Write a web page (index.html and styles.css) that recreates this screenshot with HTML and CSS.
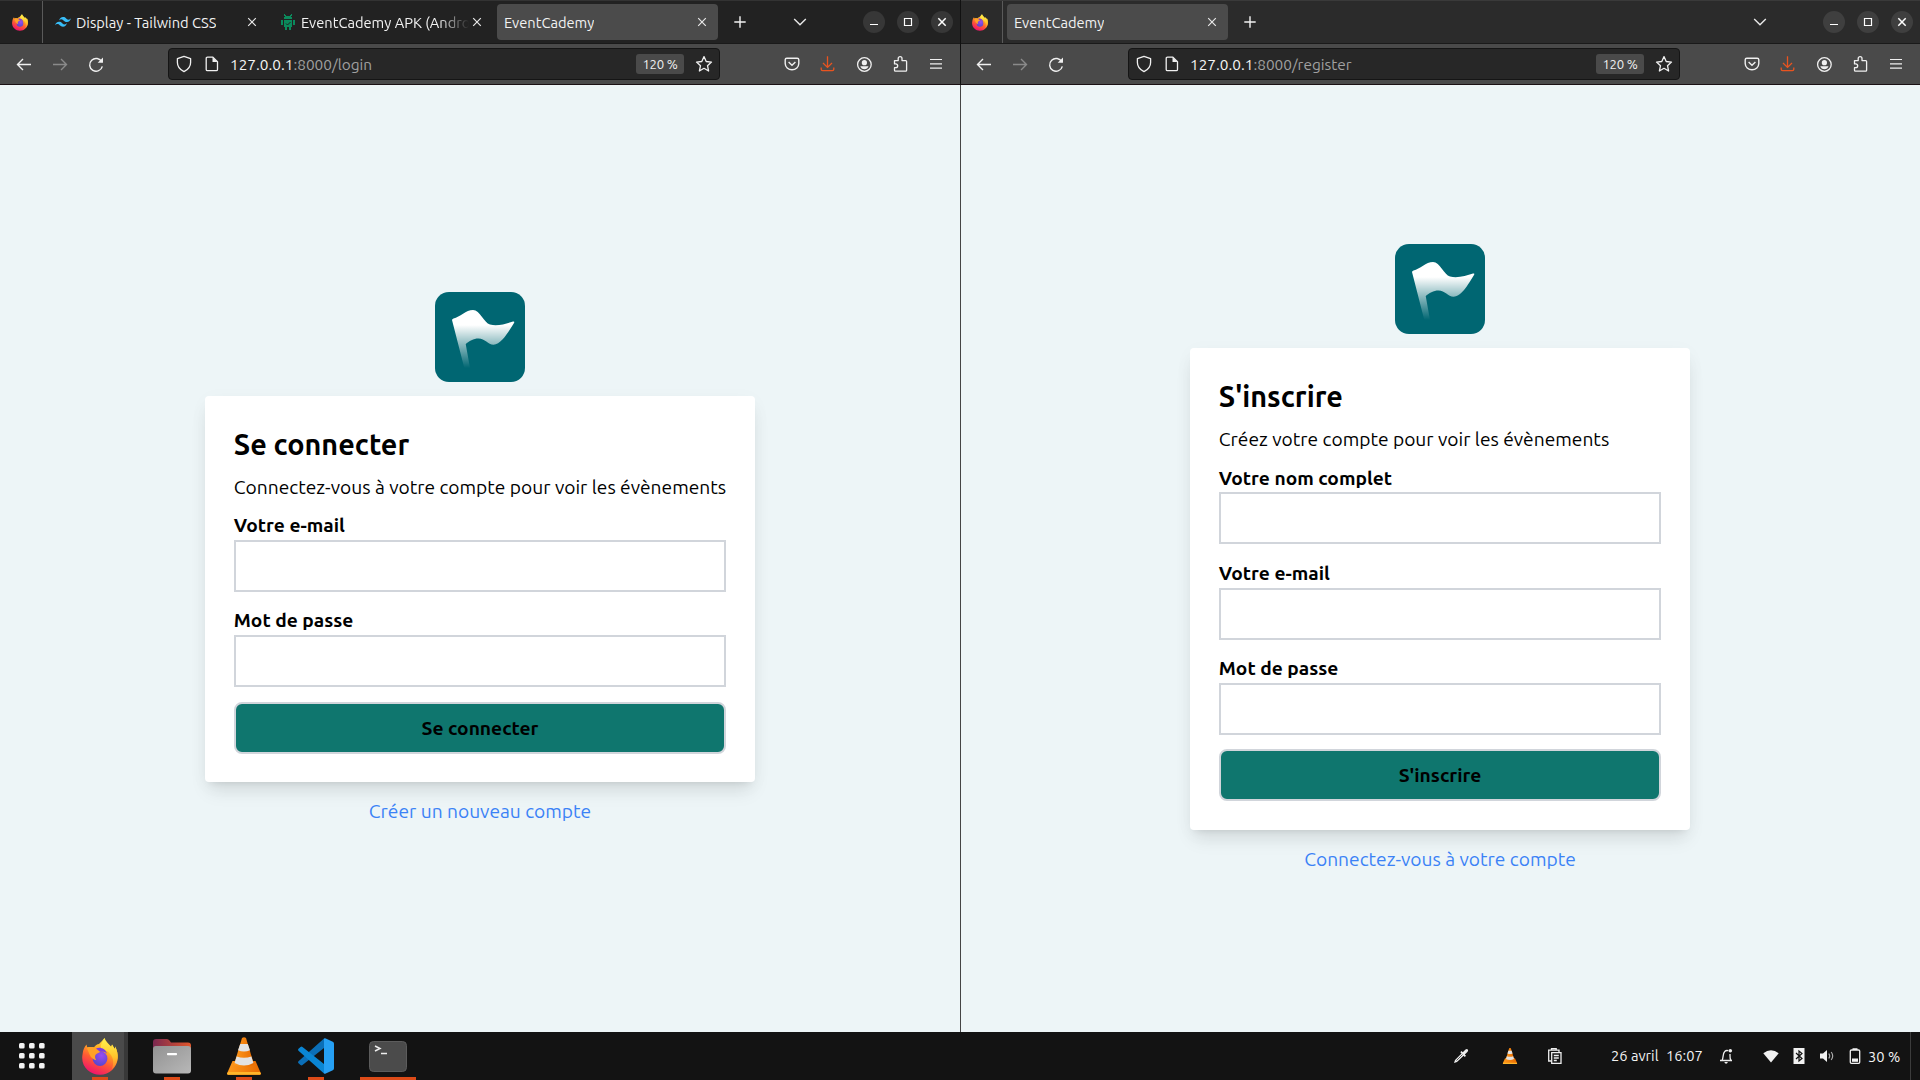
FILE: index.html
```html
<!DOCTYPE html>
<html lang="fr">
<head>
<meta charset="utf-8">
<title>EventCademy</title>
<link rel="stylesheet" href="styles.css">
</head>
<body>
<svg class="defs" width="0" height="0" aria-hidden="true">
  <defs>
    <linearGradient id="ffBody" x1="0.8" y1="0" x2="0.35" y2="1">
      <stop offset="0" stop-color="#fff04a"/><stop offset="0.35" stop-color="#ffae22"/><stop offset="0.65" stop-color="#ff5a33"/><stop offset="1" stop-color="#f0126e"/>
    </linearGradient>
    <linearGradient id="ffTail" x1="0" y1="0" x2="0" y2="1">
      <stop offset="0" stop-color="#fff44f"/><stop offset="0.6" stop-color="#ffc42c"/><stop offset="1" stop-color="#ff7a2c"/>
    </linearGradient>
    <radialGradient id="ffGlobe" cx="0.6" cy="0.3" r="0.8">
      <stop offset="0" stop-color="#9a4df0"/><stop offset="1" stop-color="#4f46c8"/>
    </radialGradient>
    <linearGradient id="flag" gradientUnits="userSpaceOnUse" x1="0" y1="18" x2="0" y2="76">
      <stop offset="0" stop-color="#fff"/><stop offset="0.26" stop-color="#fff"/><stop offset="1" stop-color="#fff" stop-opacity="0"/>
    </linearGradient>
    <linearGradient id="folderBack" x1="0" y1="0" x2="1" y2="0">
      <stop offset="0" stop-color="#7a2850"/><stop offset="1" stop-color="#e2582c"/>
    </linearGradient>
    <linearGradient id="folderFront" x1="0" y1="0" x2="1" y2="1">
      <stop offset="0" stop-color="#929292"/><stop offset="1" stop-color="#b8b8b8"/>
    </linearGradient>
    <linearGradient id="cone" x1="0" y1="0" x2="1" y2="0">
      <stop offset="0" stop-color="#ff9a1c"/><stop offset="1" stop-color="#e86a00"/>
    </linearGradient>
    <symbol id="i-firefox" viewBox="0 0 36 37">
      <path fill="url(#ffBody)" d="M.6 16C1 12 2.500 8.500 4.600 6.500c.2 1.800.6 2.800 1.400 3.600C7.800 9 10 8.800 12 9.300 13.500 7.300 15 6.300 17 6c2-2 4-4 5.500-6 1.300 3.500 4 5.500 6.500 8.500l1-2c1 2 2.200 3.500 3 4.500l.2-2.500c2 4 2.800 8 2.500 11.500C35 29.500 27.500 36.800 18 36.800S.2 29.500.2 20c0-1.500.1-2.700.4-4z"/>
      <path fill="url(#ffTail)" d="M22.500 0c.3 3.500 4.300 6 6.800 9.500l1-3c1 2.200 2 3.400 2.700 4.500l.2-2.500c2 4 2.800 8 2.500 11.500-.4 4.500-2.500 8.500-6 11.500 2.300-5.500 2-11-1.200-15C26 12.500 22 12 19.500 11 17.500 7.500 20.500 4 22.500 0z"/>
      <circle fill="url(#ffGlobe)" cx="18" cy="20.500" r="7.400"/>
      <path fill="#ffa127" d="M4.600 9.500c3-.8 5.400-.6 7.700.1 2.200.7 4 2.600 6.700 3.400-1.500 2.200-4 1.800-5.400 3.800-1 1.500-.6 3.600.6 5.400-3-.6-5.400-2.400-6.500-5.400z"/>
      <path fill="#7a3be0" d="M14 10.500c4-2 9.500 0 11 5-2-2-4.500-2.500-7-1.700z"/>
    </symbol>
    <symbol id="i-vlc" viewBox="0 0 34 38">
      <path fill="url(#cone)" d="M5.500 24h23l5.500 12.500q.2 1.300-1.200 1.300H1.200Q-.2 37.800 0 36.500z"/>
      <path fill="#ffb52a" d="M1 35h32l1 1.800-1 1H1l-1-1z"/>
      <path fill="url(#cone)" d="M15 1q2-1.600 4 0l8 26.500q-10 6-20 0z"/>
      <path fill="#e2e2e2" d="M13.200 7h7.600l2.200 6.300q-6 2.500-12 0zM9.600 19.500q7.400 2.600 14.800 0l2 6.500q-9.400 5-18.800 0z"/>
    </symbol>
    <symbol id="i-x" viewBox="0 0 16 16"><path d="M4.200 4.200l7.600 7.600M11.800 4.200l-7.600 7.600" stroke="currentColor" stroke-width="1.200" fill="none"/></symbol>
    <symbol id="i-plus" viewBox="0 0 16 16"><path d="M8 2.300v11.400M2.300 8h11.400" stroke="currentColor" stroke-width="1.400" fill="none"/></symbol>
    <symbol id="i-chev" viewBox="0 0 16 16"><path d="M2.200 5l5.800 5.800L13.800 5" stroke="currentColor" stroke-width="1.400" fill="none"/></symbol>
    <symbol id="i-min" viewBox="0 0 22 22"><path d="M7 13.500h8" stroke="#fff" stroke-width="1.200"/></symbol>
    <symbol id="i-max" viewBox="0 0 22 22"><path d="M7.500 7.500h7v7h-7z" stroke="#fff" stroke-width="1.200" fill="none"/></symbol>
    <symbol id="i-cls" viewBox="0 0 22 22"><path d="M7.300 7.300l7.400 7.400M14.700 7.300l-7.400 7.400" stroke="#fff" stroke-width="1.500"/></symbol>
    <symbol id="i-back" viewBox="0 0 20 20"><path d="M17 10.500H3.600M9 5l-5.500 5.500L9 16" stroke="currentColor" stroke-width="1.400" fill="none"/></symbol>
    <symbol id="i-fwd" viewBox="0 0 20 20"><path d="M3 10.500h13.400M11 5l5.500 5.500L11 16" stroke="currentColor" stroke-width="1.400" fill="none"/></symbol>
    <symbol id="i-reload" viewBox="0 0 20 20"><path d="M15.800 8A6.400 6.400 0 1 0 16.300 12.300" stroke="currentColor" stroke-width="1.400" fill="none"/><path d="M17 3.500v5.300h-5.300z" fill="currentColor"/></symbol>
    <symbol id="i-shield" viewBox="0 0 18 18"><path d="M9 1.300l6.600 2.400v3.800c0 4.300-2.600 7.200-6.600 9.200-4-2-6.600-4.900-6.600-9.200V3.700z" stroke="currentColor" stroke-width="1.300" fill="none" stroke-linejoin="round"/></symbol>
    <symbol id="i-page" viewBox="0 0 18 18"><path d="M4.500 2.100h5.300l4.700 4.700v7.600q0 1.300-1.300 1.300H4.500q-1.300 0-1.300-1.300V3.400q0-1.300 1.300-1.300z" stroke="currentColor" stroke-width="1.300" fill="none"/><path d="M9.500 2l5 5h-5z" fill="currentColor"/></symbol>
    <symbol id="i-star" viewBox="0 0 18 18"><path d="M9 1.600l2.200 4.900 5.300.6-4 3.600 1.100 5.300L9 13.300 4.400 16l1.100-5.300-4-3.600 5.300-.6z" stroke="currentColor" stroke-width="1.300" fill="none" stroke-linejoin="round"/></symbol>
    <symbol id="i-pocket" viewBox="0 0 20 20"><path d="M4.800 4.200h10.400q1.600 0 1.600 1.600v3.700a6.800 6.300 0 0 1-13.600 0V5.800q0-1.600 1.600-1.600z" stroke="currentColor" stroke-width="1.400" fill="none"/><path d="M6.600 8l3.400 3.200L13.400 8" stroke="currentColor" stroke-width="1.400" fill="none"/></symbol>
    <symbol id="i-dl" viewBox="0 0 20 20"><path d="M9.500 2.300v11M5 9l4.500 4.400L14 9M3.200 13.500v1.800q0 1.400 1.400 1.400h9.800q1.400 0 1.400-1.400v-1.800" stroke="#e95420" stroke-width="1.300" fill="none"/></symbol>
    <symbol id="i-user" viewBox="0 0 20 20"><circle cx="10.400" cy="10.500" r="6.800" stroke="currentColor" stroke-width="1.300" fill="none"/><circle cx="10.400" cy="8.700" r="2.600" fill="currentColor"/><path d="M6.300 12.200h8.200q-1 3-4.100 3t-4.100-3z" fill="currentColor"/></symbol>
    <symbol id="i-ext" viewBox="0 0 20 20"><path d="M4.500 6.600h3.700V4.600a1.900 1.900 0 0 1 3.800 0v2h3.700q.9 0 .9.900v8.800q0 .9-.9.900H5.400q-.9 0-.9-.9v-2.600h1.300a1.900 1.900 0 0 0 0-3.800H4.500z" stroke="currentColor" stroke-width="1.300" fill="none" stroke-linejoin="round"/></symbol>
    <symbol id="i-menu" viewBox="0 0 20 20"><path d="M4 5.500h12M4 9.800h12M4 14.200h12" stroke="currentColor" stroke-width="1.200"/></symbol>
    <symbol id="i-logo" viewBox="0 0 90 90"><rect width="90" height="90" rx="14" fill="#006672"/><path fill="url(#flag)" d="M17 28q0-1 1.500-1.500C25 25 31 18 38 18c7 0 11 13 17 14.500 8 2 16-1 23-3 1.400-.3 1.600.4 1 1.400C75 37 67 52.700 58.500 52.700c-5.500 0-8.500-6.200-15-6.200-5 0-9.500 2.500-12.800 5.500L35 76h-5.700z"/></symbol>
  </defs>
</svg>

<div class="desktop">
  <div class="windows">
    <section class="window">
      <div class="tabs">
        <div class="pinned"><svg width="16" height="17"><use href="#i-firefox"/></svg></div>
        <div class="tab tab-first">
          <svg width="16" height="16" viewBox="0 0 16 16"><path fill="#38bdf8" d="M4 6.600Q5 3 8 3c3 0 3.400 2.300 4.900 2.600q1.900.4 3.100-1.300-1 3.700-4 3.700c-3 0-3.400-2.300-4.900-2.600Q5.200 5 4 6.600zM0 11.300q1-3.600 4-3.600c3 0 3.400 2.300 4.900 2.600q1.900.4 3.100-1.300-1 3.700-4 3.700c-3 0-3.400-2.300-4.900-2.600q-1.900-.4-3.100 1.200z"/></svg>
          <span class="tab-title">Display - Tailwind CSS</span>
          <svg class="x" width="16" height="16"><use href="#i-x"/></svg>
        </div>
        <div class="tab tab-second">
          <svg width="14" height="16" viewBox="0 0 14 16"><path fill="#0b8a5c" d="M3 0h1v1h1v1h4V1h1V0h1v2h-1v1h1v2H3V3h1V2H3zM3 6h8v7h-1v3H8v-3H6v3H4v-3H3zM0 6h2v5H0zM12 6h2v5h-2z"/><path d="M5 9.500L6.500 11l3-3" stroke="#222" fill="none"/></svg>
          <span class="tab-title fade">EventCademy APK (Andro</span>
          <svg class="x" width="16" height="16"><use href="#i-x"/></svg>
        </div>
        <div class="tab active"><span class="tab-title">EventCademy</span><svg class="x" width="16" height="16"><use href="#i-x"/></svg></div>
        <svg class="plus" width="16" height="16"><use href="#i-plus"/></svg>
        <svg class="chev" width="16" height="16"><use href="#i-chev"/></svg>
        <div class="controls"><svg><use href="#i-min"/></svg><svg><use href="#i-max"/></svg><svg><use href="#i-cls"/></svg></div>
      </div>
      <div class="nav">
        <div class="nav-group"><svg><use href="#i-back"/></svg><svg class="off"><use href="#i-fwd"/></svg><svg><use href="#i-reload"/></svg></div>
        <div class="url"><svg><use href="#i-shield"/></svg><svg><use href="#i-page"/></svg><span class="address"><b>127.0.0.1</b>:8000/login</span><span class="zoom">120 %</span><svg class="star"><use href="#i-star"/></svg></div>
        <div class="nav-group tools"><svg><use href="#i-pocket"/></svg><svg><use href="#i-dl"/></svg><svg><use href="#i-user"/></svg><svg><use href="#i-ext"/></svg><svg><use href="#i-menu"/></svg></div>
      </div>
      <main class="page login">
        <svg class="logo"><use href="#i-logo"/></svg>
        <form class="card">
          <h1>Se connecter</h1>
          <p>Connectez-vous à votre compte pour voir les évènements</p>
          <label class="tight" for="l-mail">Votre e-mail</label><input id="l-mail">
          <label for="l-pass">Mot de passe</label><input id="l-pass" type="password">
          <button type="button">Se connecter</button>
        </form>
        <a class="link">Créer un nouveau compte</a>
      </main>
    </section>

    <section class="window focused">
      <div class="tabs">
        <div class="pinned"><svg width="16" height="17"><use href="#i-firefox"/></svg></div>
        <div class="tab active"><span class="tab-title">EventCademy</span><svg class="x" width="16" height="16"><use href="#i-x"/></svg></div>
        <svg class="plus" width="16" height="16"><use href="#i-plus"/></svg>
        <svg class="chev" width="16" height="16"><use href="#i-chev"/></svg>
        <div class="controls"><svg><use href="#i-min"/></svg><svg><use href="#i-max"/></svg><svg><use href="#i-cls"/></svg></div>
      </div>
      <div class="nav">
        <div class="nav-group"><svg><use href="#i-back"/></svg><svg class="off"><use href="#i-fwd"/></svg><svg><use href="#i-reload"/></svg></div>
        <div class="url"><svg><use href="#i-shield"/></svg><svg><use href="#i-page"/></svg><span class="address"><b>127.0.0.1</b>:8000/register</span><span class="zoom">120 %</span><svg class="star"><use href="#i-star"/></svg></div>
        <div class="nav-group tools"><svg><use href="#i-pocket"/></svg><svg><use href="#i-dl"/></svg><svg><use href="#i-user"/></svg><svg><use href="#i-ext"/></svg><svg><use href="#i-menu"/></svg></div>
      </div>
      <main class="page register">
        <svg class="logo"><use href="#i-logo"/></svg>
        <form class="card">
          <h1>S'inscrire</h1>
          <p>Créez votre compte pour voir les évènements</p>
          <label class="tight" for="r-name">Votre nom complet</label><input id="r-name">
          <label for="r-mail">Votre e-mail</label><input id="r-mail">
          <label for="r-pass">Mot de passe</label><input id="r-pass" type="password">
          <button type="button">S'inscrire</button>
        </form>
        <a class="link">Connectez-vous à votre compte</a>
      </main>
    </section>
  </div>

  <footer class="taskbar">
    <div class="launcher"><svg width="26" height="26" viewBox="0 0 26 26" fill="#f4f4f4"><rect width="5.600" height="5.600" rx="1.500"/><rect x="10" width="5.600" height="5.600" rx="1.500"/><rect x="20" width="5.600" height="5.600" rx="1.500"/><rect y="10" width="5.600" height="5.600" rx="1.500"/><rect x="10" y="10" width="5.600" height="5.600" rx="1.500"/><rect x="20" y="10" width="5.600" height="5.600" rx="1.500"/><rect y="20" width="5.600" height="5.600" rx="1.500"/><rect x="10" y="20" width="5.600" height="5.600" rx="1.500"/><rect x="20" y="20" width="5.600" height="5.600" rx="1.500"/></svg></div>
    <div class="app current"><svg width="36" height="37"><use href="#i-firefox"/></svg></div>
    <div class="app"><svg width="38" height="35" viewBox="0 0 38 35"><path fill="url(#folderBack)" d="M3 0h11q1.500 0 2.500 1.500L18 3.500h17q3 0 3 3V20H0V3q0-3 3-3z"/><rect y="7" width="38" height="27.500" rx="3" fill="url(#folderFront)"/><rect x="14" y="14" width="10" height="2.200" rx=".8" fill="#fff"/></svg></div>
    <div class="app"><svg width="34" height="38"><use href="#i-vlc"/></svg></div>
    <div class="app"><svg width="36" height="36" viewBox="0 0 36 36"><path fill="#0b6fb8" d="M26 .6V10L4.500 27q-1 .8-2 0L.5 25.200q-.9-1 0-2z"/><path fill="#0a86d4" d="M26 35.400V26L4.500 9q-1-.8-2 0L.5 10.800q-.9 1 0 2z"/><path fill="#26a0f4" d="M26 .4q.8-.5 1.800 0l7 3.400q1.200.7 1.200 2v24.400q0 1.300-1.200 2l-7 3.400q-1 .5-1.800 0z"/></svg></div>
    <div class="app wide"><svg width="38" height="31" viewBox="0 0 38 31"><rect x=".5" y=".5" width="37" height="30" rx="4" fill="#4b4b4b" stroke="#5c5c5c"/><path d="M6 5l5 2.500L6 10M12 12.500h6" stroke="#eee" stroke-width="1.500" fill="none"/></svg></div>
    <div class="tray">
      <svg viewBox="0 0 18 18"><path fill="#eee" d="M2 16l1-3L9.500 6.500 8.300 5.300l1.200-1.200 1.300 1.200L13.500 2.500q1.500-1 2.300 0 .8 1-.2 2.300L12.800 7.500 14 8.700l-1.200 1.200-1.200-1.200L5 15z"/><path d="M4.500 13.500l6-6" stroke="#555"/></svg>
      <svg class="t-vlc" viewBox="0 -2 34 42"><use href="#i-vlc" width="34" height="38"/></svg>
      <svg class="t-clip" viewBox="0 0 18 18"><path d="M5 14H2.700V3.200H13V5M5.500 3.200V1.600h4.700v1.600M5.700 5.700h9.300v10.600H5.700zM7.800 8.500h5M7.800 11h5M7.800 13.500h3" stroke="#eee" stroke-width="1.300" fill="none"/></svg>
      <span class="date">26 avril</span><span class="time">16:07</span>
      <svg class="t-bell" viewBox="0 0 18 18"><path d="M3 13.500h12M5 13.500c1.500-2 .5-7 2.700-9 1-1 2.300-1.200 3.500-.8M13 7c0 3-.3 5 1 6.500" stroke="#eee" stroke-width="1.300" fill="none"/><path fill="#eee" d="M7.300 15h3.600q-.5 1.700-1.800 1.700T7.300 15z"/><circle cx="13.300" cy="3.800" r="1.800" fill="#eee"/></svg>
      <svg class="t-wifi" viewBox="0 0 18 18"><path fill="#f2f2f2" d="M1.300 6.200Q9 .2 16.700 6.200L9 15.500z"/></svg>
      <svg class="t-near" viewBox="0 0 18 18"><rect x="3.500" y="1" width="11" height="16" fill="#f2f2f2"/><path d="M6 6l6 5.500L9 14V4l3 2.500L6 12" stroke="#131313" stroke-width="1.200" fill="none"/></svg>
      <svg class="t-near" viewBox="0 0 18 18"><path fill="#f2f2f2" d="M2 6.500h3L9 3v12l-4-3.500H2z"/><path d="M10.800 6.500q1.800 2.500 0 5M13.200 5q3 4 0 8" stroke="#aaa" stroke-width="1.200" fill="none"/></svg>
      <svg class="t-near" viewBox="0 0 18 18"><path d="M6.500 2h5M5.500 3h7q1.200 0 1.200 1v11.300q0 1-1.200 1h-7q-1.200 0-1.200-1V4q0-1 1.200-1z" stroke="#f2f2f2" stroke-width="1.300" fill="none"/><path fill="#f2f2f2" d="M6 11.500h6v3.300H6z"/></svg>
      <span class="percent">30 %</span>
    </div>
  </footer>
</div>
</body>
</html>
```
FILE: styles.css
```css
* { box-sizing: border-box; }
body { margin: 0; font-family: "Ubuntu", "Noto Sans", sans-serif; background: #131313; }
svg { display: block; flex: none; }
.defs { position: absolute; }
.desktop { width: 1920px; height: 1080px; display: flex; flex-direction: column; overflow: hidden; }
.windows { height: 1032px; display: flex; }
.window { width: 960px; position: relative; display: flex; flex-direction: column; }
.window.focused::after { content: ""; position: absolute; left: 0; top: 0; width: 1px; height: 100%; background: linear-gradient(#111 85px, #454545 85px); }

/* Tab strip */
.tabs { height: 44px; background: #222; border-top: 1px solid #333; border-bottom: 1px solid #1a1a1a; display: flex; align-items: center; color: #f2f2f2; font-size: 14.670px; }
.focused .tabs { background: #2b2b2b; border-top-color: #3a3a3a; }
.pinned { width: 43px; height: 100%; border-right: 1px solid #5a5a5a; display: flex; align-items: center; padding-left: 12px; }
.tab { height: 36px; display: flex; align-items: center; }
.tab-title { white-space: nowrap; overflow: hidden; padding-top: 1px; }
.tab .x { margin-left: auto; }
.x, .chev { color: #e8e8e8; }
.tab-first { width: 229px; padding: 0 12px; }
.tab-first .tab-title { margin-left: 5px; }
.tab-second { width: 221px; padding: 0 8px 0 9px; }
.tab-second .tab-title { width: 169px; margin-left: 6px; }
.fade { -webkit-mask-image: linear-gradient(90deg, #000 82%, transparent); mask-image: linear-gradient(90deg, #000 82%, transparent); }
.tab.active { width: 221px; margin-left: 4px; padding: 0 8px 0 7px; background: #4b4b4b; border-radius: 4px; }
.plus { margin-left: 13.500px; }
.chev { margin-left: auto; margin-right: 55px; }
.controls { display: flex; gap: 12px; padding-right: 7px; }
.controls svg { width: 22px; height: 22px; border-radius: 50%; background: #373737; }
.focused .controls svg { background: #3f3f3f; }

/* Navigation bar */
.nav { height: 41px; background: #4a4a4a; border-bottom: 1px solid #1a1014; display: flex; align-items: center; color: #f0f0f0; }
.nav-group { display: flex; gap: 16px; padding-left: 14px; }
.nav-group svg { width: 20px; height: 20px; }
.nav-group .off { color: #8a8a8a; }
.tools { margin-left: auto; padding: 0 14px 0 0; }
.url { width: 552px; height: 32px; margin-left: 62px; padding: 0 6px; background: #272727; border: 1px solid #151515; border-radius: 4px; display: flex; align-items: center; }
.url svg { width: 18px; height: 18px; margin-right: 10px; }
.address { margin-left: -1px; font-size: 15.400px; color: #a0a0a0; }
.address b { font-weight: 400; color: #f5f5f5; }
.zoom { width: 48px; height: 20px; margin-left: auto; margin-right: 11px; background: #4a4a4a; border-radius: 3px; font-size: 13.200px; line-height: 21px; text-align: center; white-space: nowrap; letter-spacing: -.25px; }
.url .star { margin-right: 0; }

/* Page */
.page { flex: 1; background: #edf5f7; display: flex; flex-direction: column; align-items: center; color: #000; font-size: 19.200px; line-height: 28.800px; }
.login { padding-top: 207px; }
.register { padding-top: 159.450px; }
.logo { width: 90px; height: 90px; margin-bottom: 14px; }
.card { padding: 28.800px; background: #fff; border-radius: 4px; box-shadow: 0 12px 18px -4px rgba(0, 0, 0, .1), 0 5px 7px -5px rgba(0, 0, 0, .1), 0 4px 20px rgba(0, 0, 0, .03); display: flex; flex-direction: column; }
.login .card { width: 550px; }
.register .card { width: 500px; }
.card h1 { margin: 0 0 9.600px; font-size: 28.800px; line-height: 38.400px; font-weight: 600; }
.card p { margin: 0; white-space: nowrap; }
.card label { margin-top: 14.400px; font-weight: 600; }
.card label.tight { margin-top: 9.600px; }
.card input { height: 52px; border: 2px solid #d1d5db; border-radius: 0; background: #fff; outline: 0; }
.card button { height: 52px; margin-top: 14.400px; padding: 0; border: 2px solid #d1d5db; border-radius: 8px; background: #0f766e; color: #000; font: 600 19.200px "Ubuntu", "Noto Sans", sans-serif; }
.link { margin-top: 14.700px; color: #3b82f6; }

/* Taskbar */
.taskbar { height: 48px; background: #131313; display: flex; color: #f2f2f2; }
.launcher { width: 64px; display: flex; align-items: center; justify-content: center; }
.app { width: 56px; margin: 0 8px; position: relative; display: flex; align-items: center; justify-content: center; }
.app::after { content: ""; position: absolute; left: 20px; bottom: 0; width: 16px; height: 3px; background: #dd4b18; }
.app.wide::after { left: 0; width: 56px; }
.current { background: #4a4a4a; border-right: 4px solid #383838; padding-left: 4px; }
.tray { margin-left: auto; width: 469px; padding-left: 1px; display: flex; align-items: center; box-shadow: inset -9px 0 0 #131313, inset -10px 0 0 #3c3c3c; }
.tray svg { width: 18px; height: 18px; }
.tray .t-vlc { margin-left: 31px; }
.tray .t-clip { margin-left: 27px; }
.date, .time { padding-bottom: 1px; font-size: 14.670px; white-space: nowrap; }
.date { margin-left: 47px; width: 55px; }
.time { width: 34px; }
.tray .t-bell { margin-left: 17px; }
.tray .t-wifi { margin-left: 27px; }
.tray .t-near { margin-left: 10px; }
.percent { margin-left: 4px; font-size: 14.670px; white-space: nowrap; }
```
